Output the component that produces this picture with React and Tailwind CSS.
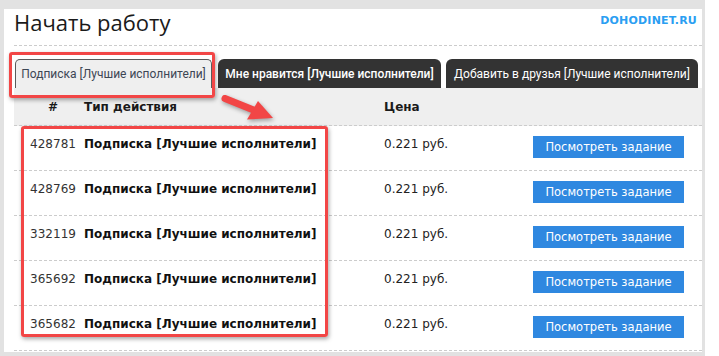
import React from 'react'

const tasks = [
  { id: '428781', price: '0.221 руб.' },
  { id: '428769', price: '0.221 руб.' },
  { id: '332119', price: '0.221 руб.' },
  { id: '365692', price: '0.221 руб.' },
  { id: '365682', price: '0.221 руб.' },
]

const verdana = { fontFamily: '"DejaVu Sans", Verdana, sans-serif' }
const roboto = { fontFamily: 'Roboto, "Liberation Sans", sans-serif' }
const openSans = { fontFamily: '"Open Sans", sans-serif' }

export default function App() {
  return (
    <div className="relative w-[719px] h-[356px] overflow-hidden bg-white">
      <div className="w-[705px] h-[356px] bg-[#e2e2e2] pt-[9px] pl-[4px] pr-[3px]">
        <div className="h-[343px] bg-white pl-[10px]">
          {/* Title */}
          <div className="flex justify-between h-[37px] border-b border-dashed border-[#cccccc]">
            <h1 className="text-[22px] leading-[26px] text-[#1a1a1a]" style={openSans}>
              Начать работу
            </h1>
            <span
              className="mt-[4px] mr-[5px] text-[11px] font-bold text-[#2a9ef2] tracking-[0.2px]"
              style={verdana}
            >
              DOHODINET.RU
            </span>
          </div>

          {/* Tabs */}
          <div className="flex mt-[13px] h-[29px] text-[12px] whitespace-nowrap" style={roboto}>
            <div className="ml-[1px] w-[197px] flex items-center justify-center rounded-t-[5px] border border-b-0 border-[#5a5a5a] bg-[#efefef] text-[#3d4654]">
              Подписка [Лучшие исполнители]
            </div>
            <div className="ml-[6px] w-[223px] flex items-center justify-center rounded-t-[6px] bg-[#333333] text-white font-medium">
              Мне нравится [Лучшие исполнители]
            </div>
            <div className="ml-[5px] w-[252px] flex items-center justify-center rounded-t-[6px] bg-[#333333] text-white">
              Добавить в друзья [Лучшие исполнители]
            </div>
          </div>

          {/* Table */}
          <div className="text-[12px]" style={verdana}>
            <div className="flex items-center h-[38px] bg-[#efefef] border-b border-dashed border-[#cccccc] font-bold text-[#1a1a1a]">
              <div className="w-[70px] pl-[8px] text-center">#</div>
              <div className="w-[300px]">Тип действия</div>
              <div className="w-[149px]">Цена</div>
            </div>
            {tasks.map((t) => (
              <div
                key={t.id}
                className="flex items-start h-[45px] pt-[10px] border-b border-dashed border-[#cccccc] leading-[16px]"
              >
                <div className="w-[70px] pl-[8px] text-center text-[#333333]">{t.id}</div>
                <div className="w-[300px] font-bold text-[#111111]">Подписка [Лучшие исполнители]</div>
                <div className="w-[149px] text-[#222222]">{t.price}</div>
                <button className="w-[151px] h-[22px] bg-[#2f88e0] text-white text-[11.5px] leading-[22px] text-center">
                  Посмотреть задание
                </button>
              </div>
            ))}
          </div>
        </div>
      </div>

      {/* Red highlight annotations */}
      <div className="absolute left-[9px] top-[52px] w-[206px] h-[46px] border-[3px] border-[#f24646] rounded-[3px] shadow-[1px_2px_4px_rgba(0,0,0,0.35)]" />
      <div className="absolute left-[21px] top-[126px] w-[307px] h-[211px] border-[3px] border-[#f24646] rounded-[3px] shadow-[1px_2px_4px_rgba(0,0,0,0.35)]" />
      <svg
        className="absolute left-0 top-0"
        width="719"
        height="356"
        viewBox="0 0 719 356"
        style={{ filter: 'drop-shadow(1px 2px 2px rgba(0,0,0,0.35))' }}
      >
        <line x1="225" y1="98.5" x2="256" y2="111" stroke="#f24646" strokeWidth="7" strokeLinecap="round" />
        <polygon points="258,101 273,118 247,119.5" fill="#f24646" />
      </svg>
    </div>
  )
}
